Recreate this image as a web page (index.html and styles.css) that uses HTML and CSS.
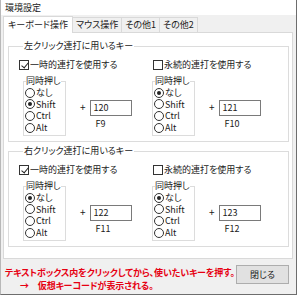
FILE: index.html
```html
<!DOCTYPE html>
<html lang="ja">
<head>
<meta charset="utf-8">
<link rel="stylesheet" href="styles.css">
</head>
<body>
<div class="window">
  <div class="titlebar">環境設定</div>
  <div class="client">
    <div class="tabs">
      <div class="tab active">キーボード操作</div>
      <div class="tab">マウス操作</div>
      <div class="tab">その他1</div>
      <div class="tab">その他2</div>
    </div>
    <div class="page">
      <fieldset class="group">
        <legend>左クリック連打に用いるキー</legend>
        <div class="cols">
          <div class="col">
            <div class="check"><span class="cb checked"></span>一時的連打を使用する</div>
            <div class="row">
              <fieldset class="mod">
                <legend>同時押し</legend>
                <div class="radio"><span class="rb"></span>なし</div>
                <div class="radio"><span class="rb on"></span>Shift</div>
                <div class="radio"><span class="rb"></span>Ctrl</div>
                <div class="radio"><span class="rb"></span>Alt</div>
              </fieldset>
              <span class="plus">+</span>
              <div class="keycol">
                <div class="tb">120</div>
                <div class="fkey">F9</div>
              </div>
            </div>
          </div>
          <div class="col col-right">
            <div class="check"><span class="cb"></span>永続的連打を使用する</div>
            <div class="row">
              <fieldset class="mod">
                <legend>同時押し</legend>
                <div class="radio"><span class="rb on"></span>なし</div>
                <div class="radio"><span class="rb"></span>Shift</div>
                <div class="radio"><span class="rb"></span>Ctrl</div>
                <div class="radio"><span class="rb"></span>Alt</div>
              </fieldset>
              <span class="plus">+</span>
              <div class="keycol">
                <div class="tb">121</div>
                <div class="fkey">F10</div>
              </div>
            </div>
          </div>
        </div>
      </fieldset>
      <fieldset class="group">
        <legend>右クリック連打に用いるキー</legend>
        <div class="cols">
          <div class="col">
            <div class="check"><span class="cb checked"></span>一時的連打を使用する</div>
            <div class="row">
              <fieldset class="mod">
                <legend>同時押し</legend>
                <div class="radio"><span class="rb on"></span>なし</div>
                <div class="radio"><span class="rb"></span>Shift</div>
                <div class="radio"><span class="rb"></span>Ctrl</div>
                <div class="radio"><span class="rb"></span>Alt</div>
              </fieldset>
              <span class="plus">+</span>
              <div class="keycol">
                <div class="tb">122</div>
                <div class="fkey">F11</div>
              </div>
            </div>
          </div>
          <div class="col col-right">
            <div class="check"><span class="cb"></span>永続的連打を使用する</div>
            <div class="row">
              <fieldset class="mod">
                <legend>同時押し</legend>
                <div class="radio"><span class="rb on"></span>なし</div>
                <div class="radio"><span class="rb"></span>Shift</div>
                <div class="radio"><span class="rb"></span>Ctrl</div>
                <div class="radio"><span class="rb"></span>Alt</div>
              </fieldset>
              <span class="plus">+</span>
              <div class="keycol">
                <div class="tb">123</div>
                <div class="fkey">F12</div>
              </div>
            </div>
          </div>
        </div>
      </fieldset>
    </div>
    <div class="footer">
      <div class="notes">
        <div class="note">テキストボックス内をクリックしてから、使いたいキーを押す。</div>
        <div class="note indent">→　仮想キーコードが表示される。</div>
      </div>
      <div class="button">閉じる</div>
    </div>
  </div>
</div>
</body>
</html>
```

FILE: styles.css
```css
* { box-sizing: border-box; }
html, body { margin: 0; padding: 0; background: #fff; }
body {
  font-family: "Noto Sans CJK JP", "Noto Sans", sans-serif;
  font-size: 9px;
  font-feature-settings: "palt";
  color: #1a1a1a;
  width: 300px;
  height: 296px;
  overflow: hidden;
}
.window {
  width: 297px;
  height: 295px;
  border-right: 1px solid #6d6d6d;
  border-bottom: 1px solid #6d6d6d;
  border-left: 1px solid #b8b8b8;
  display: flex;
  flex-direction: column;
}
.titlebar {
  height: 15px;
  line-height: 15px;
  padding-left: 4px;
  background: #fff;
}
.client {
  flex: 1;
  background: #f0f0f0;
  padding: 1px 3px 0 2px;
  display: flex;
  flex-direction: column;
  min-height: 0;
}
.tabs {
  display: flex;
  height: 16px;
  align-items: flex-end;
}
.tab {
  height: 15px;
  line-height: 14px;
  padding: 0 3px;
  border: 1px solid #d9d9d9;
  border-bottom: none;
  border-left: none;
  background: #f0f0f0;
}
.tab.active {
  height: 17px;
  margin-bottom: -1px;
  border-left: 1px solid #d9d9d9;
  background: #fff;
  position: relative;
  z-index: 1;
  padding: 0 4px;
  line-height: 16px;
}
.page {
  height: 227px;
  flex: none;
  background: #fff;
  border: 1px solid #d9d9d9;
  padding: 8px 3px 0 4px;
  display: flex;
  flex-direction: column;
  gap: 4px;
}
fieldset { margin: 0; min-width: 0; }
.group {
  border: 1px solid #dcdcdc;
  height: 101px;
  flex: none;
  padding: 0 0 0 10px;
}
.group > legend {
  padding: 0 1px;
  margin-left: 4px;
  line-height: 10px;
}
.cols {
  display: flex;
  padding-top: 7px;
}
.col {
  width: 130px;
  display: flex;
  flex-direction: column;
}
.check {
  display: flex;
  align-items: center;
  height: 13px;
}
.col-right .check { padding-left: 4px; }
.cb {
  width: 10px;
  height: 10px;
  border: 1px solid #333;
  margin-right: 1px;
  position: relative;
  background: #fff;
}
.cb.checked::after {
  content: "";
  position: absolute;
  left: 2.5px;
  top: 0px;
  width: 3px;
  height: 6px;
  border-right: 1px solid #222;
  border-bottom: 1px solid #222;
  transform: rotate(40deg);
}
.row {
  display: flex;
  align-items: flex-start;
  margin-top: 5px;
  padding-left: 4px;
}
.col-right .row { padding-left: 3px; }
.mod {
  border: 1px solid #dcdcdc;
  width: 43px;
  height: 60px;
  padding: 1px 0 0 1px;
}
.mod > legend {
  padding: 0;
  margin-left: 1px;
  line-height: 10px;
}
.radio {
  display: flex;
  align-items: center;
  height: 11.6px;
}
.rb {
  width: 10px;
  height: 10px;
  border: 1px solid #333;
  border-radius: 50%;
  margin-right: 1px;
  position: relative;
  background: #fff;
}
.rb.on::after {
  content: "";
  position: absolute;
  left: 2px;
  top: 2px;
  width: 4px;
  height: 4px;
  border-radius: 50%;
  background: #222;
}
.plus {
  margin: 25px 4px 0 14px;
  font-size: 10px;
  line-height: 12px;
}
.keycol {
  margin-top: 24px;
  display: flex;
  flex-direction: column;
}
.tb {
  width: 42px;
  height: 16px;
  border: 1px solid #7a7a7a;
  line-height: 14px;
  padding-left: 3px;
  background: #fff;
}
.fkey {
  padding-left: 6px;
  margin-top: 2px;
  line-height: 12px;
}
.footer {
  flex: 1;
  display: flex;
  align-items: flex-start;
  padding: 4px 4px 0 2px;
  min-height: 0;
}
.notes {
  padding-top: 3px;
  flex: 1;
  min-width: 0;
}
.note {
  color: #e60012;
  font-weight: bold;
  line-height: 13px;
  white-space: nowrap;
  letter-spacing: -0.1px;
}
.note.indent { padding-left: 15px; }
.button {
  flex: none;
  width: 53px;
  height: 19px;
  border: 1px solid #adadad;
  background: #e1e1e1;
  text-align: center;
  line-height: 17px;
  margin-top: 2px;
}
```
